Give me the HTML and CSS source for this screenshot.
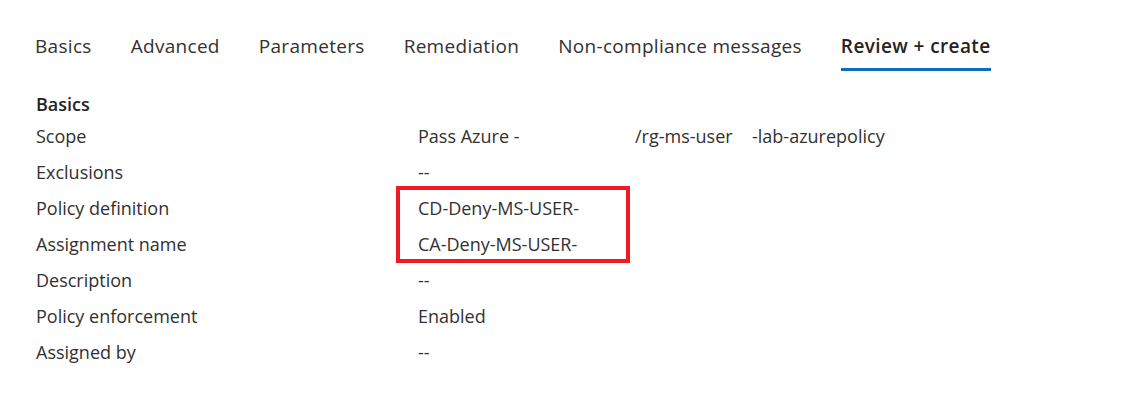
FILE: index.html
```html
<!DOCTYPE html>
<html>
<head>
<meta charset="utf-8">
<link rel="stylesheet" href="styles.css">
</head>
<body>
<div class="page">
  <nav class="tabs">
    <div class="tab">Basics</div>
    <div class="tab">Advanced</div>
    <div class="tab">Parameters</div>
    <div class="tab">Remediation</div>
    <div class="tab">Non-compliance messages</div>
    <div class="tab active">Review + create</div>
  </nav>
  <h2 class="section">Basics</h2>
  <div class="grid">
    <div class="label">Scope</div>
    <div class="value scope"><span class="s1">Pass Azure -</span><span class="s2">/rg-ms-user</span><span class="s3">-lab-azurepolicy</span></div>
    <div class="label">Exclusions</div>
    <div class="value">--</div>
    <div class="label">Policy definition</div>
    <div class="value">CD-Deny-MS-USER-</div>
    <div class="label">Assignment name</div>
    <div class="value">CA-Deny-MS-USER-</div>
    <div class="label">Description</div>
    <div class="value">--</div>
    <div class="label">Policy enforcement</div>
    <div class="value">Enabled</div>
    <div class="label">Assigned by</div>
    <div class="value">--</div>
    <div class="highlight"></div>
  </div>
</div>
</body>
</html>
```
FILE: styles.css
```css
* { box-sizing: border-box; }
html, body { margin: 0; padding: 0; background: #ffffff; }
body {
  font-family: "Open Sans", "Noto Sans", sans-serif;
  color: #323130;
  width: 1132px;
  height: 400px;
  overflow: hidden;
}
.page { padding-left: 35px; }
.tabs {
  display: flex;
  gap: 39px;
  padding-top: 34px;
}
.tab {
  font-size: 19px;
  letter-spacing: 0.3px;
  line-height: 24px;
  padding-bottom: 10px;
  border-bottom: 3px solid transparent;
  color: #323130;
  white-space: nowrap;
}
.tab.active {
  font-weight: 600;
  letter-spacing: 0.4px;
  color: #242424;
  border-bottom-color: #0f6cbd;
}
.section {
  margin: 21px 0 2px 1px;
  font-size: 18px;
  line-height: 24px;
  font-weight: 600;
  color: #242424;
}
.grid {
  position: relative;
  display: grid;
  grid-template-columns: 382px 1fr;
  grid-auto-rows: 36px;
  margin-left: 1px;
}
.label, .value {
  font-size: 18px;
  line-height: 36px;
  white-space: nowrap;
}
.scope { display: flex; }
.scope .s1 { width: 217px; }
.scope .s2 { width: 117px; }
.highlight {
  position: absolute;
  left: 360px;
  top: 68px;
  width: 234px;
  height: 77px;
  border: 4px solid #ed1c24;
  pointer-events: none;
}
```
